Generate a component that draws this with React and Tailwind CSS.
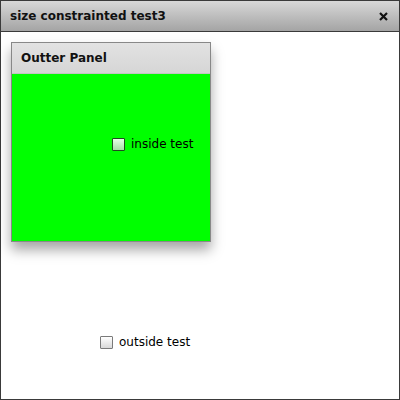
import React from "react";

const font = { fontFamily: '"DejaVu Sans", sans-serif' };

const Check = ({ label, tint }) => (
  <label className="flex items-center gap-[6px] text-[12px] text-black" style={font}>
    <span
      className={`w-[13px] h-[13px] border rounded-[1px] ${
        tint
          ? "border-[#1f4a1f] bg-gradient-to-b from-white/90 to-[#cfd8cf]/80"
          : "border-[#7a7a7a] bg-gradient-to-b from-white to-[#d8d8d8]"
      }`}
    />
    <span>{label}</span>
  </label>
);

export default function App() {
  return (
    <div className="w-[400px] h-[400px] bg-white border border-[#3a3a3a] flex flex-col" style={font}>
      {/* title bar */}
      <div className="h-[31px] flex items-center justify-between pl-[9px] pr-[11px] bg-gradient-to-b from-[#d8d8d8] to-[#a4a4a4] border-b border-[#3a3a3a] shrink-0">
        <span className="text-[12px] font-bold text-[#111]">size constrainted test3</span>
        <svg width="9" height="9" viewBox="0 0 9 9">
          <path d="M1 1 L8 8 M8 1 L1 8" stroke="#111" strokeWidth="2.2" />
        </svg>
      </div>

      {/* outer panel */}
      <div className="ml-[10px] mt-[10px] w-[200px] h-[200px] border border-[#888] flex flex-col shadow-[0_8px_12px_rgba(0,0,0,0.35)]">
        <div className="h-[31px] flex items-center pl-[9px] bg-gradient-to-b from-[#e2e2e2] to-[#d6d6d6] border-b border-[#c4c4c4] shrink-0">
          <span className="text-[12px] font-bold text-[#111]">Outter Panel</span>
        </div>
        <div className="flex-1 bg-[#00ff00] pl-[100px] pt-[61px]">
          <Check label="inside test" tint />
        </div>
      </div>

      <div className="ml-[99px] mt-[91px]">
        <Check label="outside test" />
      </div>
    </div>
  );
}
